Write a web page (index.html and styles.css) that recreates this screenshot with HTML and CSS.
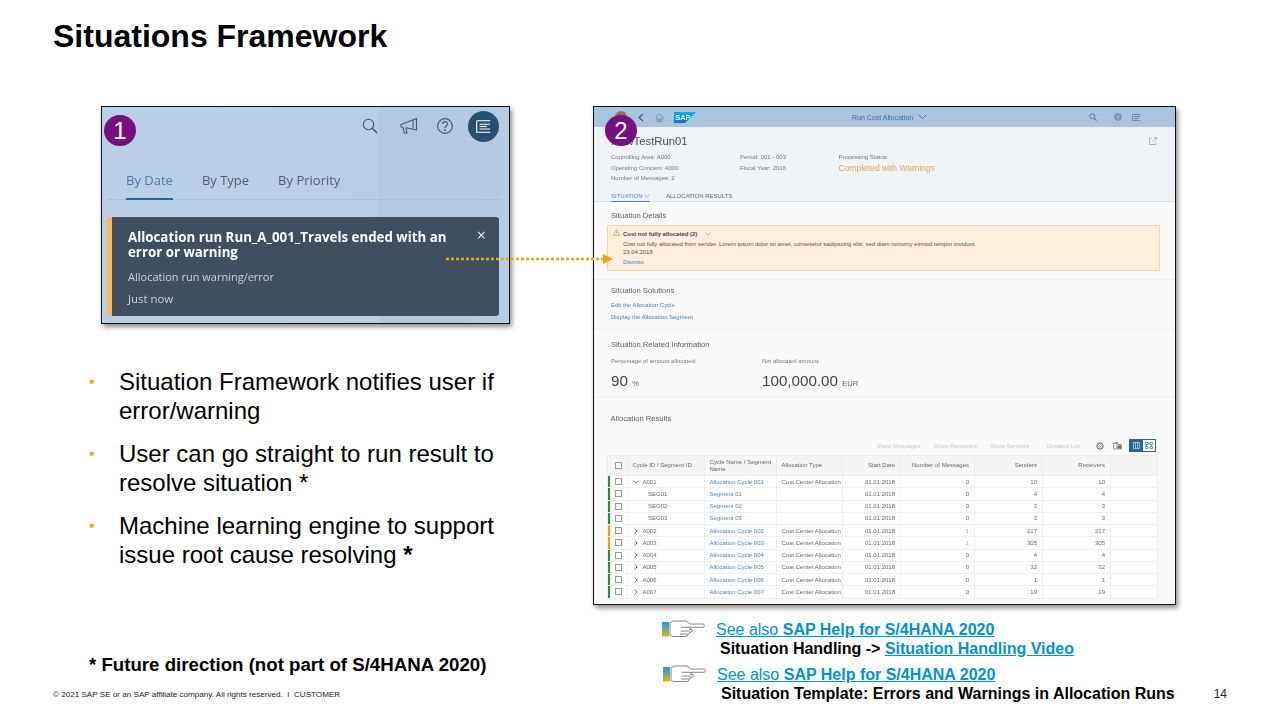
FILE: index.html
```html
<!DOCTYPE html>
<html lang="en">
<head>
    <meta charset="UTF-8">
    <meta name="viewport" content="width=device-width, initial-scale=1.0">
    <title>Situations Framework</title>
    <link rel="stylesheet" href="styles.css">
</head>
<body>
<div class="slide">

    <h1 class="slide-title">Situations Framework</h1>

    <!-- Screenshot 1: notification panel -->
    <div class="shot shot-one">
        <div class="shell-icons soft">
            <svg class="ic-search" width="18" height="18" viewBox="0 0 18 18"><circle cx="7.5" cy="7.5" r="5.2" fill="none" stroke="#3f5a72" stroke-width="1.1"/><path d="M11.3 11.3 16 16" stroke="#3f5a72" stroke-width="1.6"/></svg>
            <svg class="ic-mega" width="18" height="18" viewBox="0 0 18 18"><path d="M1 7.5 16.5 1.5V13L6 10.8 7 16H4.2L3 10.2 1 10Z" fill="none" stroke="#3f5a72" stroke-width="1.1" stroke-linejoin="round"/><path d="M13 3v9" stroke="#3f5a72" stroke-width="1"/></svg>
            <svg class="ic-help" width="18" height="18" viewBox="0 0 18 18"><circle cx="9" cy="9" r="7.4" fill="none" stroke="#3f5a72" stroke-width="1.1"/><path d="M6.6 7c0-3.2 5-3.2 5-.2 0 2-2.6 2-2.6 4.2" fill="none" stroke="#3f5a72" stroke-width="1.2"/><circle cx="9" cy="13.2" r=".9" fill="#3f5a72"/></svg>
            <div class="notif-btn">
                <svg width="15" height="13" viewBox="0 0 15 13"><path d="M.7.7H14.3M.7.7V12.3H14.3M3.5 4.2H14M3.5 6.5H11M3.5 9H14" fill="none" stroke="#fff" stroke-width="1.1"/></svg>
            </div>
        </div>
        <div class="notif-tabs soft">
            <span class="notif-tab active">By Date</span>
            <span class="notif-tab">By Type</span>
            <span class="notif-tab">By Priority</span>
        </div>
        <div class="notif-card soft">
            <span class="notif-close">×</span>
            <div class="notif-title">Allocation run Run_A_001_Travels ended with an error or warning</div>
            <div class="notif-sub">Allocation run warning/error</div>
            <div class="notif-sub notif-time">Just now</div>
        </div>
    </div>

    <!-- Screenshot 2: run result page -->
    <div class="shot shot-two">
        <div class="app-bar soft">
            <div class="app-bar-left">
                <span class="avatar"></span>
                <svg width="6" height="9" viewBox="0 0 6 9"><path d="M5 .8 1.2 4.5 5 8.2" fill="none" stroke="#34526e" stroke-width="1.1"/></svg>
                <svg class="ic-home" width="9" height="9" viewBox="0 0 9 9"><path d="M.5 4.5 4.5.7l4 3.8M1.8 3.8V8.3h5.4V3.8M3.6 8.3V5.8h1.8v2.5" fill="none" stroke="#6f8aa3" stroke-width=".9"/></svg>
                <svg class="sap-logo" width="22" height="11" viewBox="0 0 22 11"><defs><linearGradient id="sapg" x1="0" y1="0" x2="0" y2="1"><stop offset="0" stop-color="#00aeef"/><stop offset="1" stop-color="#0076cb"/></linearGradient></defs><path d="M0 0H22L11 11H0Z" fill="url(#sapg)"/><text x="1.2" y="8" class="sap-logo-text">SAP</text></svg>
            </div>
            <div class="app-bar-title">Run Cost Allocation
                <svg width="9" height="6" viewBox="0 0 9 6"><path d="M.7.8 4.5 4.6 8.3.8" fill="none" stroke="#4a6a88" stroke-width=".9"/></svg>
            </div>
            <div class="app-bar-right">
                <svg class="bar-search" width="8" height="8" viewBox="0 0 8 8"><circle cx="3.3" cy="3.3" r="2.5" fill="none" stroke="#5c7a96"/><path d="M5.2 5.2 7.6 7.6" stroke="#5c7a96" stroke-width="1.2"/></svg>
                <svg class="bar-gear" width="8" height="8" viewBox="0 0 8 8"><circle cx="4" cy="4" r="3.3" fill="none" stroke="#5c7a96"/><circle cx="4" cy="4" r="1.6" fill="none" stroke="#5c7a96" stroke-width=".8"/></svg>
                <svg width="9" height="7" viewBox="0 0 9 7"><path d="M.4.4H8.6M.4.4V6.6H8.6M2 2.5H8M2 4.5H6.5" fill="none" stroke="#5c7a96" stroke-width=".8"/></svg>
            </div>
        </div>

        <div class="obj-header soft">
            <div class="obj-title-row">
                <span class="obj-title">NewTestRun01</span>
                <svg width="8" height="8" viewBox="0 0 8 8"><path d="M3 1.2H.5V7.5H6.8V5M3.5 4.5 7.3.7M4.8.5H7.5V3.2" fill="none" stroke="#8a9bb0" stroke-width=".7"/></svg>
            </div>
            <div class="obj-attrs">
                <div class="obj-col col-a">
                    <span>Controlling Area: A000</span>
                    <span>Operating Concern: A000</span>
                    <span>Number of Messages: 2</span>
                </div>
                <div class="obj-col col-b">
                    <span>Period: 001 - 003</span>
                    <span>Fiscal Year: 2016</span>
                </div>
                <div class="obj-col col-c">
                    <span>Processing Status:</span>
                    <span class="status-warn">Completed with Warnings</span>
                </div>
            </div>
            <div class="obj-tabs">
                <span class="obj-tab active">SITUATION
                    <svg width="6" height="4" viewBox="0 0 6 4"><path d="M.5.7 3 3.2 5.5.7" fill="none" stroke="#4d84b5" stroke-width=".6"/></svg>
                </span>
                <span class="obj-tab">ALLOCATION RESULTS</span>
            </div>
        </div>

        <div class="obj-body soft">
            <section class="sec sec-details">
                <h3 class="sec-title">Situation Details</h3>
                <div class="msg-box">
                    <svg class="msg-icon" width="7" height="7" viewBox="0 0 7 7"><path d="M3.5.6 6.6 6.4H.4Z" fill="none" stroke="#e09a3e" stroke-width=".7"/><path d="M3.5 2.6v2" stroke="#e09a3e" stroke-width=".7"/></svg>
                    <div class="msg-head">Cost not fully allocated (2)
                        <svg width="6" height="4" viewBox="0 0 6 4"><path d="M.5.7 3 3.2 5.5.7" fill="none" stroke="#6a8aa8" stroke-width=".6"/></svg>
                    </div>
                    <div class="msg-text">Cost not fully allocated from sender. Lorem ipsum dolor sit amet, consetetur sadipscing elitr, sed diam nonumy eirmod tempor invidunt.</div>
                    <div class="msg-text">23.04.2018</div>
                    <a class="msg-link">Dismiss</a>
                </div>
            </section>

            <section class="sec sec-solutions">
                <h3 class="sec-title">Situation Solutions</h3>
                <a class="sol-link">Edit the Allocation Cycle</a>
                <a class="sol-link">Display the Allocation Segment</a>
            </section>

            <section class="sec sec-related">
                <h3 class="sec-title">Situation Related Information</h3>
                <div class="kpis">
                    <div class="kpi kpi-pct">
                        <div class="kpi-label">Percentage of amount allocated:</div>
                        <div class="kpi-value">90 <small>%</small></div>
                    </div>
                    <div class="kpi">
                        <div class="kpi-label">Not allocated amount:</div>
                        <div class="kpi-value">100,000.00 <small>EUR</small></div>
                    </div>
                </div>
            </section>

            <section class="sec sec-results">
                <h3 class="sec-title">Allocation Results</h3>
                <div class="tbl-toolbar">
                    <span>Show Messages</span>
                    <span>Show Receivers</span>
                    <span>Show Senders</span>
                    <span class="tool-detail">Detailed List</span>
                    <svg class="tool-ic" width="8" height="8" viewBox="0 0 8 8"><circle cx="4" cy="4" r="3.2" fill="none" stroke="#5f6b78"/><path d="M1.8 1.8 6.2 6.2M3 1 7 5M1 3l4 4" stroke="#5f6b78" stroke-width=".5"/></svg>
                    <svg class="tool-ic" width="9" height="8" viewBox="0 0 9 8"><path d="M.5 1.5H4V7H.5ZM2 1.5V.5h3v2h3.5V7H4" fill="none" stroke="#5f6b78" stroke-width=".7"/><path d="M4.5 3.5H8V6.5H4.5Z" fill="#5f6b78"/></svg>
                    <div class="view-toggle">
                        <span class="view-btn on"><svg width="7" height="7" viewBox="0 0 7 7"><path d="M.5.5H6.5V6.5H.5ZM2.5.5V6.5M4.5.5V6.5" fill="none" stroke="#cfdce8" stroke-width=".7"/></svg></span>
                        <span class="view-btn"><svg width="8" height="7" viewBox="0 0 8 7"><path d="M.5.5H3V2.5H.5ZM5 .5H7.5V2.5H5ZM.5 4.5H3V6.5H.5ZM5 4.5H7.5V6.5H5ZM3 1.5H5M1.7 2.5V4.5M6.2 2.5V4.5" fill="none" stroke="#3a6d9a" stroke-width=".7"/></svg></span>
                    </div>
                </div>
                <table class="grid">
                    <colgroup>
                        <col class="c-mark"><col class="c-check"><col class="c-id"><col class="c-name"><col class="c-type"><col class="c-date"><col class="c-num"><col class="c-send"><col class="c-recv"><col class="c-end">
                    </colgroup>
                    <thead>
                        <tr>
                            <th></th><th class="center"><i class="box"></i></th>
                            <th>Cycle ID / Segment ID</th><th>Cycle Name / Segment Name</th><th>Allocation Type</th>
                            <th class="num">Start Date</th><th class="num">Number of Messages</th><th class="num">Senders</th><th class="num">Receivers</th><th></th>
                        </tr>
                    </thead>
                    <tbody id="gridBody"></tbody>
                </table>
            </section>
        </div>

        <span class="num-badge badge-two">2</span>
    </div>

    <span class="num-badge badge-one">1</span>

    <!-- Dotted arrow between the screenshots -->
    <svg class="link-arrow" width="168" height="12" viewBox="0 0 168 12">
        <path d="M0 6H160" stroke="#eda80f" stroke-width="2.6" stroke-dasharray="3 2"/>
        <path d="M157 1 167 6 157 11Z" fill="#eda80f"/>
    </svg>

    <ul class="bullets">
        <li>Situation Framework notifies user if error/warning</li>
        <li>User can go straight to run result to resolve situation *</li>
        <li>Machine learning engine to support issue root cause resolving <b>*</b></li>
    </ul>

    <div class="future-note">* Future direction (not part of S/4HANA 2020)</div>

    <!-- See also links -->
    <div class="see-also see-one">
        <svg class="hand" width="46" height="20" viewBox="0 0 46 20"><use href="#handShape"/></svg>
        <div class="see-text">
            <div class="see-line"><a class="see-link">See also <b>SAP Help for S/4HANA 2020</b></a></div>
            <div class="see-sub">Situation Handling -&gt; <a class="see-link"><b>Situation Handling Video</b></a></div>
        </div>
    </div>
    <div class="see-also see-two">
        <svg class="hand" width="46" height="20" viewBox="0 0 46 20"><use href="#handShape"/></svg>
        <div class="see-text">
            <div class="see-line"><a class="see-link">See also <b>SAP Help for S/4HANA 2020</b></a></div>
            <div class="see-sub">Situation Template: Errors and Warnings in Allocation Runs</div>
        </div>
    </div>

    <svg class="defs" width="0" height="0">
        <defs>
            <linearGradient id="cuffg" x1="0" y1="0" x2="0" y2="1">
                <stop offset="0" stop-color="#1a9ad6"/><stop offset=".55" stop-color="#6fae8a"/><stop offset="1" stop-color="#f5ad00"/>
            </linearGradient>
            <g id="handShape">
                <rect x="1" y="2" width="7" height="14.5" fill="url(#cuffg)"/>
                <path d="M9 3 12 1H25L29 4H42.5Q44.5 5.7 42.5 7.3H30L28.5 9.5H31Q32 11 30.5 12H28.5Q29 13.5 27 14.5 26.5 16.5 24.5 16.5H12L9 15.5Z" fill="#fff" stroke="#666" stroke-width=".8" stroke-linejoin="round"/>
                <path d="M20 7.3H30M19.5 11H28.5M19 14H27" stroke="#666" stroke-width=".8" fill="none"/>
            </g>
        </defs>
    </svg>

    <div class="slide-footer">
        <span>© 2021 SAP SE or an SAP affiliate company. All rights reserved.&nbsp; ǀ&nbsp; CUSTOMER</span>
    </div>
    <div class="page-no">14</div>
</div>

<script>
    // Rows of the allocation table: [marker, expand, id, name, type, messages, senders, receivers]
    const rows = [
        ['ok', 'down', 'A001', 'Allocation Cycle 001', 'Cost Center Allocation', 0, 10, 10],
        ['ok', '', 'SEG01', 'Segment 01', '', 0, 4, 4],
        ['ok', '', 'SEG02', 'Segment 02', '', 0, 3, 3],
        ['ok', '', 'SEG03', 'Segment 03', '', 0, 3, 3],
        ['warn', 'right', 'A002', 'Allocation Cycle 002', 'Cost Center Allocation', 1, 217, 217],
        ['warn', 'right', 'A003', 'Allocation Cycle 003', 'Cost Center Allocation', 1, 305, 305],
        ['ok', 'right', 'A004', 'Allocation Cycle 004', 'Cost Center Allocation', 0, 4, 4],
        ['ok', 'right', 'A005', 'Allocation Cycle 005', 'Cost Center Allocation', 0, 32, 32],
        ['ok', 'right', 'A006', 'Allocation Cycle 006', 'Cost Center Allocation', 0, 1, 1],
        ['ok', 'right', 'A007', 'Allocation Cycle 007', 'Cost Center Allocation', 0, 19, 19]
    ];

    const chevrons = {
        down: '<svg class="chev" width="6" height="6" viewBox="0 0 6 6"><path d="M.6 1.8 3 4.2 5.4 1.8" fill="none" stroke="#34526e" stroke-width=".9"/></svg>',
        right: '<svg class="chev" width="6" height="6" viewBox="0 0 6 6"><path d="M1.8.6 4.2 3 1.8 5.4" fill="none" stroke="#34526e" stroke-width=".9"/></svg>'
    };

    document.getElementById('gridBody').innerHTML = rows.map(function (r) {
        const idCell = r[1] ? chevrons[r[1]] + r[2] : '<span class="seg-id">' + r[2] + '</span>';
        return '<tr>' +
            '<td class="mark ' + r[0] + '"></td>' +
            '<td class="center"><i class="box"></i></td>' +
            '<td>' + idCell + '</td>' +
            '<td class="lnk">' + r[3] + '</td>' +
            '<td>' + r[4] + '</td>' +
            '<td class="num">01.01.2018</td>' +
            '<td class="num' + (r[5] ? ' warn-num' : '') + '">' + r[5] + '</td>' +
            '<td class="num">' + r[6] + '</td>' +
            '<td class="num">' + r[7] + '</td>' +
            '<td></td></tr>';
    }).join('');
</script>
</body>
</html>
```

FILE: styles.css
```css
/* Basic reset */
* {
    margin: 0;
    padding: 0;
    box-sizing: border-box;
}

body {
    font-family: "Liberation Sans", Arial, sans-serif;
    background-color: #fff;
    color: #000;
    overflow: hidden;
}

/* Slide canvas: the top level blocks sit freely on it */
.slide {
    position: relative;
    width: 1280px;
    height: 719px;
    overflow: hidden;
}

.slide-title {
    position: absolute;
    left: 53px;
    top: 18px;
    font-size: 32px;
    line-height: 36px;
    font-weight: bold;
}

/* The pasted screenshots are scaled pictures, so their content is a bit soft */
.soft {
    filter: blur(0.35px);
}

/* Framed screenshots */
.shot {
    position: absolute;
    border: 1.5px solid #111;
    box-shadow: 2px 3px 5px rgba(0, 0, 0, 0.45);
    overflow: hidden;
}

.shot-one {
    left: 101px;
    top: 106px;
    width: 409px;
    height: 218px;
    padding: 3px 10px 0 5px;
    background: linear-gradient(90deg, #bacfe5 0, #b9cee4 68%, #b2c9e0 68%, #b2c9e0 88%, #b8cde3 100%);
}

.num-badge {
    position: absolute;
    width: 32px;
    height: 31px;
    border-radius: 50%;
    background-color: #76107f;
    color: #fff;
    font-size: 24px;
    line-height: 31px;
    text-align: center;
}

.badge-one {
    left: 104px;
    top: 115px;
}

.badge-two {
    left: 11px;
    top: 8px;
}

/* Shell icons of screenshot 1 */
.shell-icons {
    display: flex;
    justify-content: flex-end;
    align-items: center;
    height: 32px;
}

.ic-search {
    margin-right: 21px;
}

.ic-mega {
    margin-right: 18px;
}

.ic-help {
    margin-right: 14px;
}

.notif-btn {
    display: flex;
    align-items: center;
    justify-content: center;
    width: 31px;
    height: 31px;
    border-radius: 50%;
    background-color: #27506f;
}

.notif-tabs {
    display: flex;
    gap: 29px;
    height: 58px;
    padding: 28.5px 0 0 19px;
    border-bottom: 1px solid #a5c2dc;
}

.notif-tab {
    height: 29.5px;
    font-size: 13px;
    line-height: 18px;
    color: #55606b;
    font-family: "Open Sans", sans-serif;
}

.notif-tab.active {
    color: #4f7ba3;
    border-bottom: 2px solid #2a6496;
}

.notif-card {
    position: relative;
    height: 99px;
    margin-top: 16.5px;
    padding: 13px 50px 0 16px;
    background-color: #3f4f5f;
    border-left: 5px solid #fdb94f;
    border-radius: 3px;
    color: #fff;
    font-family: "Open Sans", sans-serif;
}

.notif-title {
    font-size: 13.3px;
    line-height: 15.5px;
    font-weight: 700;
}

.notif-sub {
    margin-top: 9px;
    font-size: 11px;
    line-height: 14px;
    color: #cdd3d9;
}

.notif-time {
    margin-top: 8px;
    font-size: 11.4px;
}

.notif-close {
    position: absolute;
    right: 13px;
    top: 10px;
    font-size: 16px;
    line-height: 16px;
    color: #e8ebee;
}

/* Screenshot 2 */
.shot-two {
    left: 593px;
    top: 106px;
    width: 583px;
    height: 499px;
    background-color: #fafafa;
    color: #555;
}

.app-bar {
    display: flex;
    align-items: center;
    height: 20px;
    background-color: #a9c5de;
    position: relative;
}

.app-bar-left {
    display: flex;
    align-items: center;
    gap: 11px;
    padding-left: 21px;
}

.avatar {
    width: 12px;
    height: 12px;
    border-radius: 50%;
    background-color: #a0694f;
}

.sap-logo {
    margin-left: -1px;
}

.sap-logo-text {
    font-size: 7.5px;
    font-weight: bold;
    fill: #fff;
}

.app-bar-title {
    position: absolute;
    left: 258px;
    top: 4.5px;
    display: flex;
    align-items: center;
    gap: 5px;
    font-size: 7px;
    line-height: 11px;
    color: #4a6a88;
}

.app-bar-right {
    display: flex;
    align-items: center;
    margin-left: auto;
    padding-right: 34px;
}

.bar-search {
    margin-right: 17px;
}

.bar-gear {
    margin-right: 10px;
}

.obj-header {
    height: 75px;
    padding: 7px 18px 0 17px;
    background-color: #eef3f8;
    border-bottom: 1px solid #d3e2ef;
}

.obj-title-row {
    display: flex;
    justify-content: space-between;
    align-items: center;
    height: 13px;
}

.obj-title {
    font-size: 11.3px;
    color: #4a4f55;
}

.obj-attrs {
    display: flex;
    height: 33px;
    margin-top: 5px;
}

.obj-col {
    display: flex;
    flex-direction: column;
    font-size: 6px;
    line-height: 10.5px;
    color: #777;
}

.col-a {
    width: 129px;
}

.col-b {
    width: 98.5px;
}

.status-warn {
    font-size: 8.5px;
    color: #e9a44f;
}

.obj-tabs {
    display: flex;
    gap: 16px;
    margin-top: 6px;
    font-size: 6px;
    line-height: 10px;
}

.obj-tab {
    height: 10.5px;
    color: #666;
}

.obj-tab.active {
    width: 39px;
    white-space: nowrap;
    color: #4d84b5;
    border-bottom: 1px solid #4d84b5;
}

.sec {
    border-bottom: 1px solid #f1f1f1;
    padding: 0 15px 0 17px;
}

.sec-title {
    font-size: 7.65px;
    line-height: 10px;
    font-weight: normal;
    color: #5c5c5c;
}

.sec-details {
    height: 78px;
    padding-top: 8.5px;
}

.msg-box {
    position: relative;
    height: 46px;
    margin: 4px 0 0 -4px;
    padding: 4px 0 0 15px;
    background-color: #feeedb;
    border: 1px solid #fbd59b;
    border-radius: 1px;
    font-size: 5.95px;
    line-height: 8px;
    color: #555;
}

.msg-icon {
    position: absolute;
    left: 5px;
    top: 3px;
}

.msg-head {
    font-weight: bold;
    margin-bottom: 2px;
    color: #444;
}

.msg-head svg {
    margin-left: 6px;
}

.msg-link {
    display: block;
    margin-top: 2px;
    color: #4d84b5;
}

.sec-solutions {
    height: 50px;
    padding-top: 6px;
}

.sol-link {
    display: block;
    font-size: 5.95px;
    line-height: 11.5px;
    color: #3d82bf;
}

.sol-link:first-of-type {
    margin-top: 4px;
}

.sec-related {
    height: 67px;
    padding-top: 9.5px;
}

.kpis {
    display: flex;
    margin-top: 7px;
}

.kpi-pct {
    width: 151px;
}

.kpi-label {
    font-size: 5.95px;
    line-height: 9px;
    color: #777;
}

.kpi-value {
    margin-top: 6.5px;
    font-size: 15.2px;
    line-height: 18px;
    color: #444;
}

.kpi-value small {
    font-size: 7.5px;
    color: #666;
}

.sec-results {
    border-bottom: none;
    padding: 16.5px 18px 0 13px;
}

.sec-results .sec-title {
    padding-left: 3.5px;
}

.tbl-toolbar {
    display: flex;
    justify-content: flex-end;
    align-items: center;
    gap: 13px;
    height: 14px;
    margin-top: 15px;
    padding-right: 1px;
    font-size: 6px;
    color: #b9cbdc;
}

.tool-detail {
    margin-left: 5px;
    margin-right: 3px;
}

.tool-ic + .tool-ic {
    margin-left: -4px;
}

.view-toggle {
    display: flex;
    margin-left: -6px;
    border: 1px solid #2a6496;
    background-color: #fff;
}

.view-btn {
    display: flex;
    align-items: center;
    justify-content: center;
    width: 12.5px;
    height: 11px;
}

.view-btn.on {
    background-color: #2a6496;
}

/* Allocation table */
.grid {
    width: 550px;
    margin-top: 2.5px;
    border-collapse: collapse;
    table-layout: fixed;
    font-size: 6px;
    background-color: #fff;
}

.c-mark { width: 3px; }
.c-check { width: 17px; }
.c-id { width: 77px; }
.c-name { width: 72px; }
.c-type { width: 66px; }
.c-date { width: 58px; }
.c-num { width: 74px; }
.c-send { width: 68px; }
.c-recv { width: 68px; }
.c-end { width: 47px; }

.grid th {
    height: 20px;
    padding: 0 2px 0 4.5px;
    background-color: #f5f5f5;
    border: 1px solid #ececec;
    font-weight: normal;
    text-align: left;
    line-height: 6.5px;
    color: #666;
}

.grid td {
    height: 12.25px;
    padding: 0 5px 0 4.5px;
    border: 1px solid #efefef;
    color: #666;
    white-space: nowrap;
    line-height: 6px;
}

.grid .center {
    padding: 0 1px 0 0;
    text-align: center;
}

.grid .num {
    padding-right: 5px;
    text-align: right;
}

.grid td.mark {
    padding: 0;
    border-top-color: #fff;
    border-bottom-color: #fff;
}

.mark.ok {
    background-color: #2b8a3e;
}

.mark.warn {
    background-color: #f39a1d;
}

.box {
    display: inline-block;
    width: 7px;
    height: 7px;
    vertical-align: middle;
    background-color: #fff;
    border: 1px solid #9a9a9a;
}

.chev {
    margin: 0 4px 0 0;
    vertical-align: -1px;
}

.seg-id {
    padding-left: 15.5px;
}

.grid td.lnk {
    color: #4d84b5;
}

.grid td.warn-num {
    color: #e9a44f;
}

/* Dotted arrow */
.link-arrow {
    position: absolute;
    left: 446px;
    top: 253px;
}

/* Bullets */
.bullets {
    position: absolute;
    left: 89px;
    top: 367px;
    width: 430px;
    list-style: none;
    font-size: 24px;
    line-height: 29px;
}

.bullets li {
    position: relative;
    padding-left: 30px;
    margin-bottom: 14px;
}

.bullets li::before {
    content: "•";
    position: absolute;
    left: 0;
    top: 0;
    font-size: 16px;
    color: #f0ab00;
}

.future-note {
    position: absolute;
    left: 89px;
    top: 653.5px;
    font-size: 18.67px;
    line-height: 22px;
    font-weight: bold;
}

/* See also blocks */
.see-also {
    position: absolute;
    display: flex;
}

.see-one {
    left: 661px;
    top: 620px;
}

.see-two {
    left: 662px;
    top: 665px;
}

.hand {
    flex: none;
    margin-right: 9px;
}

.see-link {
    color: #0092d1;
    text-decoration: underline;
}

.see-line {
    font-size: 16px;
    line-height: 19px;
}

.see-sub {
    padding-left: 4px;
    font-size: 16px;
    line-height: 20px;
    font-weight: bold;
}

.defs {
    position: absolute;
}

/* Footer */
.slide-footer {
    position: absolute;
    left: 53px;
    top: 689px;
    font-size: 8.1px;
    line-height: 11px;
    color: #222;
}

.page-no {
    position: absolute;
    right: 53px;
    top: 687px;
    font-size: 12px;
    line-height: 14px;
    color: #222;
}
```
